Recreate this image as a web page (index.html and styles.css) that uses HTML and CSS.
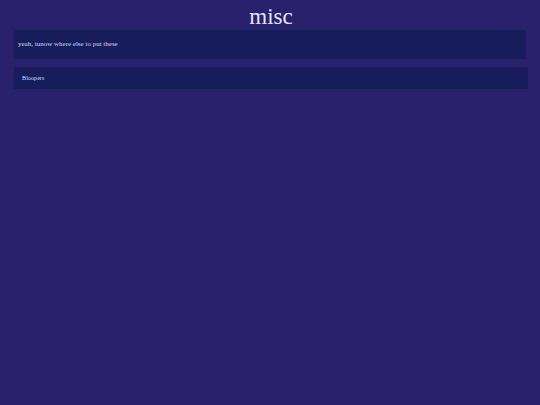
FILE: index.html
```html
<!DOCTYPE html>
<html lang="en">
<head>
<meta charset="utf-8">
<title>misc</title>
<link rel="stylesheet" href="styles.css">
</head>
<body>
  <main class="page">
    <h1 class="title">misc</h1>
    <section class="intro">
      <p>yeah, iunow where else to put these</p>
    </section>
    <section class="entry">
      <a class="entry-link" href="#">Bloopers</a>
    </section>
  </main>
</body>
</html>
```

FILE: styles.css
```css
html, body {
  margin: 0;
  padding: 0;
  background: #29216b;
  height: 100%;
}

.page {
  display: flex;
  flex-direction: column;
  padding: 3px 12px 0 14px;
  font-family: "Liberation Serif", "Times New Roman", serif;
  color: #d8d8f2;
}

.title {
  margin: 0;
  font-size: 23px;
  line-height: 27px;
  font-weight: normal;
  text-align: center;
  color: #e4e4ff;
}

.intro {
  margin-right: 2px;
  background: #171c5a;
  padding: 10px 4px;
}

.intro p {
  margin: 0;
  font-size: 7px;
  line-height: 9px;
}

.entry {
  margin-top: 8px;
  background: #171c5a;
  padding: 7px 8px;
}

.entry-link {
  display: block;
  font-size: 6.2px;
  line-height: 8px;
  color: #d8d8f2;
  text-decoration: none;
}
```
